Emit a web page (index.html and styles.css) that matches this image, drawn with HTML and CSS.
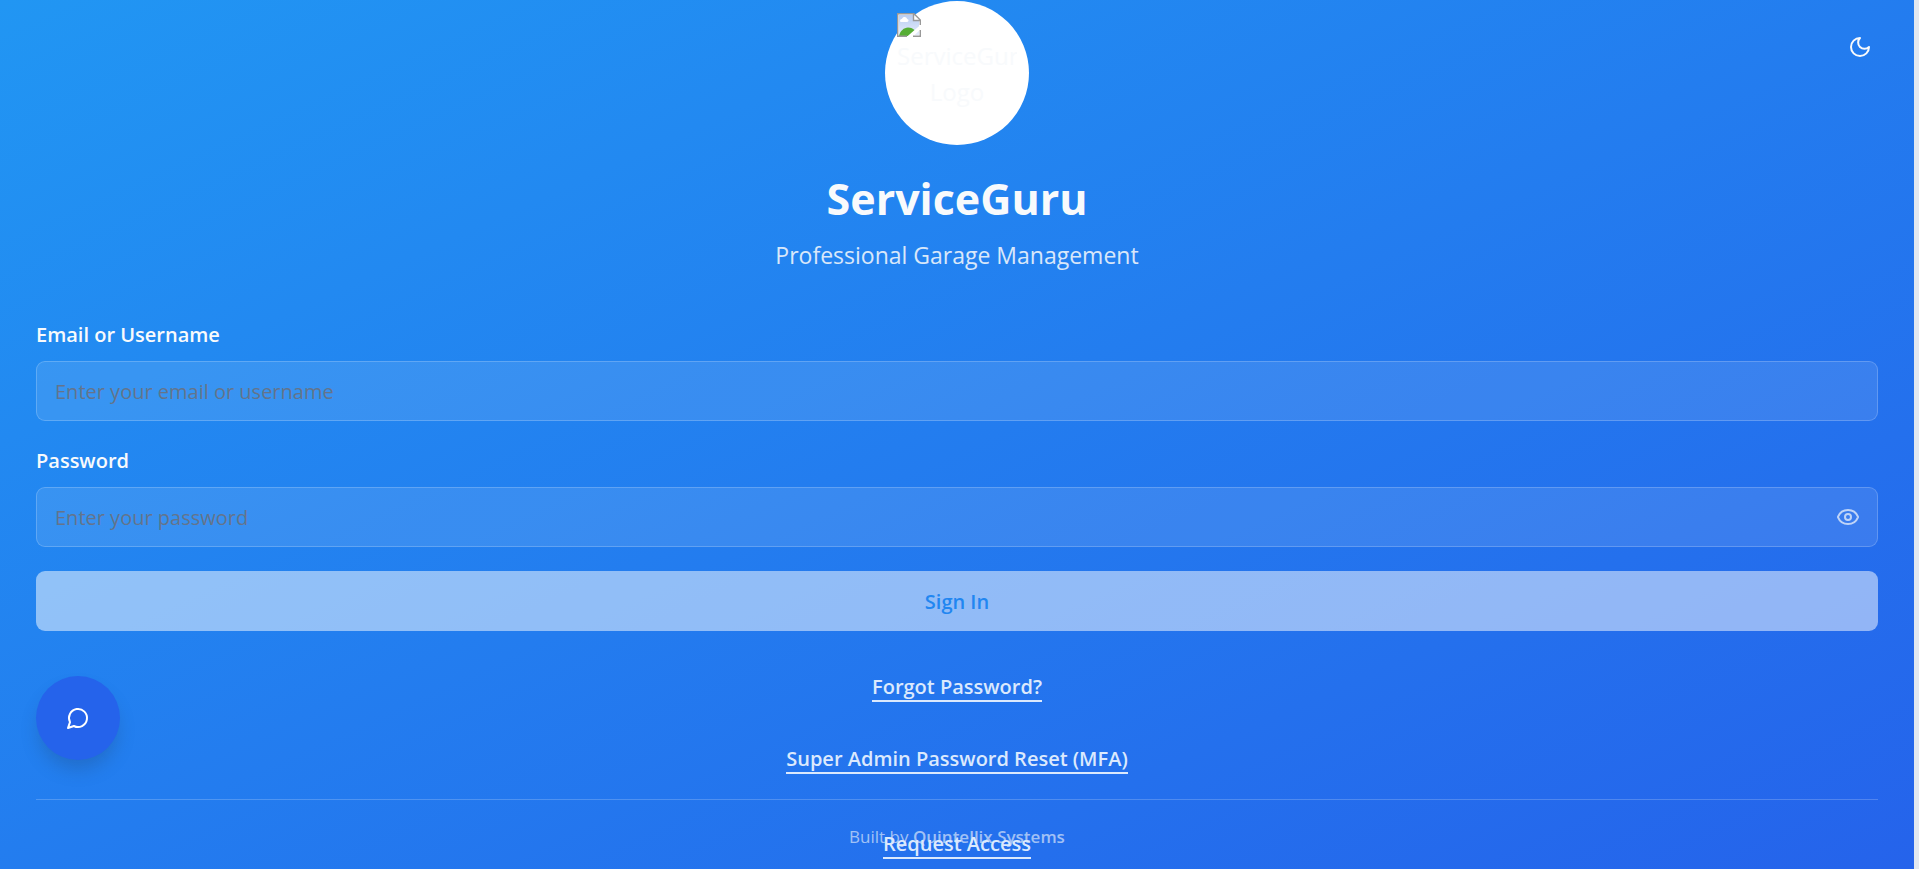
FILE: index.html
```html
<!DOCTYPE html>
<html lang="en">
<head>
<meta charset="utf-8">
<meta name="viewport" content="width=device-width, initial-scale=1">
<title>ServiceGuru</title>
<link rel="stylesheet" href="styles.css">
</head>
<body>
<main class="screen">
  <button class="theme-toggle" type="button" aria-label="Switch to dark theme">
    <svg class="icon" viewBox="0 0 24 24"><path d="M12 3a6 6 0 0 0 9 9 9 9 0 1 1-9-9Z"/></svg>
  </button>

  <header class="brand">
    <div class="logo">
      <div class="logo-frame">
        <svg class="logo-missing" viewBox="0 0 24 24" aria-hidden="true">
          <defs>
            <linearGradient id="sky" x1="0" y1="0" x2="0" y2="1">
              <stop offset="0" stop-color="#b9cdf2"/><stop offset="1" stop-color="#e3ebfb"/>
            </linearGradient>
          </defs>
          <path d="M1 1h15v6h7v16H1Z" fill="#fff"/>
          <path d="M2 2h14v6h6v14H2Z" fill="url(#sky)"/>
          <path d="M3 8c0-2 2-2 2-2 1-3 5-2 5 0 2 0 2 3 0 3H4C3 9 3 8 3 8Z" fill="#fff"/>
          <path d="M2 23c1-5 5-8.500 9-8.500 3 0 5 1 7 3l-6 5.500Z" fill="#56ae35"/>
          <path d="M9.500 24L24 11.500v4.500l-8.500 8Z" fill="#fff"/>
          <path d="M.7 24V.7H17l6.300 6.300V12M16.500 1v6.500H23M.7 23.300H10M16 23.300h7.300V17" fill="none" stroke="#999" stroke-width="1.400"/>
        </svg>
        <span class="logo-alt">ServiceGuru Logo</span>
      </div>
    </div>
    <h1 class="title">ServiceGuru</h1>
    <p class="subtitle">Professional Garage Management</p>
  </header>

  <form class="form">
    <div class="field">
      <label class="label" for="user">Email or Username</label>
      <input class="input" id="user" type="text" placeholder="Enter your email or username">
    </div>
    <div class="field">
      <label class="label" for="pass">Password</label>
      <div class="input-wrap">
        <input class="input input-secret" id="pass" type="password" placeholder="Enter your password">
        <button class="reveal" type="button" aria-label="Show password">
          <svg class="icon" viewBox="0 0 24 24"><path d="M2.062 12.348a1 1 0 0 1 0-.696 10.750 10.750 0 0 1 19.876 0 1 1 0 0 1 0 .696 10.750 10.750 0 0 1-19.876 0"/><circle cx="12" cy="12" r="3"/></svg>
        </button>
      </div>
    </div>
    <button class="submit" type="submit" disabled>Sign In</button>
  </form>

  <nav class="links">
    <a class="link" href="#forgot">Forgot Password?</a>
    <a class="link" href="#reset">Super Admin Password Reset (MFA)</a>
    <a class="link link-request" href="#request">Request Access</a>
  </nav>

  <footer class="footer">Built by <strong>Quintellix Systems</strong></footer>

  <button class="chat" type="button" aria-label="Open chat">
    <svg class="icon" viewBox="0 0 24 24"><path d="M7.900 20A9 9 0 1 0 4 16.100L2 22Z"/></svg>
  </button>
</main>
</body>
</html>
```
FILE: styles.css
```css
* { box-sizing: border-box; }

body {
  margin: 0;
  padding-right: 5px;
  background: #e2e8f0;
  color: #f8fafc;
  font-family: "Segoe UI", "Open Sans", "Noto Sans", sans-serif;
  font-size: 20px;
  line-height: 27px;
}

button, input { font: inherit; }

button {
  border: 0;
  padding: 0;
  background: none;
  color: inherit;
}

.screen {
  position: relative;
  min-height: 100vh;
  padding: 1px 36px 8px;
  overflow: hidden;
  background: linear-gradient(to bottom right, #2196f3, #2563eb);
}

.icon {
  display: block;
  width: 24px;
  height: 24px;
  fill: none;
  stroke: currentColor;
  stroke-width: 2;
  stroke-linecap: round;
  stroke-linejoin: round;
}

.theme-toggle {
  position: absolute;
  top: 23px;
  right: 30px;
  padding: 12px;
}

.brand {
  display: flex;
  flex-direction: column;
  align-items: center;
  text-align: center;
}

.logo {
  width: 144px;
  height: 144px;
  padding: 12px;
  border-radius: 50%;
  background: #fff;
}

.logo-frame {
  height: 100%;
  overflow: hidden;
}

.logo-missing {
  display: block;
  width: 24px;
  height: 24px;
}

.logo-alt {
  display: block;
  margin-top: 1px;
  font-size: 24px;
  line-height: 36px;
}

.title {
  margin: 24px 0 8px;
  font-size: 43px;
  line-height: 60px;
  font-weight: 700;
}

.subtitle {
  margin: 0;
  font-size: 23px;
  line-height: 36px;
  opacity: 0.85;
}

.form {
  display: flex;
  flex-direction: column;
  margin-top: 48px;
}

.field {
  display: flex;
  flex-direction: column;
  gap: 13px;
  margin-bottom: 26px;
}

.field + .field { margin-bottom: 24px; }

.label { font-weight: 600; }

.input {
  display: block;
  width: 100%;
  height: 60px;
  padding: 0 18px;
  border: 1px solid rgba(255, 255, 255, 0.2);
  border-radius: 9px;
  background: rgba(255, 255, 255, 0.1);
  color: #f8fafc;
  outline: 0;
}

.input::placeholder { color: #64748b; opacity: 1; }

.input-wrap { position: relative; }

.input-secret { padding-right: 60px; }

.reveal {
  position: absolute;
  top: 12px;
  right: 12px;
  padding: 6px;
  opacity: 0.7;
}

.submit {
  height: 60px;
  border-radius: 9px;
  background: rgba(255, 255, 255, 0.5);
  color: #2186f1;
  font-weight: 600;
}

.links {
  position: relative;
  z-index: 1;
  display: flex;
  flex-direction: column;
  align-items: center;
  gap: 43px;
  margin-top: 42px;
}

.link {
  border-bottom: 2px solid currentColor;
  color: #dbe9fd;
  font-weight: 600;
  text-decoration: none;
}

.link-request { margin-top: 13px; }

.footer {
  position: absolute;
  right: 36px;
  bottom: 0;
  left: 36px;
  padding: 23px 0 19px;
  border-top: 1px solid rgba(255, 255, 255, 0.2);
  color: rgba(248, 250, 252, 0.6);
  font-size: 17px;
  text-align: center;
}

.footer strong { font-weight: 600; }

.chat {
  position: absolute;
  bottom: 109px;
  left: 36px;
  z-index: 2;
  display: grid;
  place-items: center;
  width: 84px;
  height: 84px;
  border-radius: 50%;
  background: #2563eb;
  color: #fff;
  box-shadow: 0 12px 18px -3px rgba(30, 60, 90, 0.25);
}
```
